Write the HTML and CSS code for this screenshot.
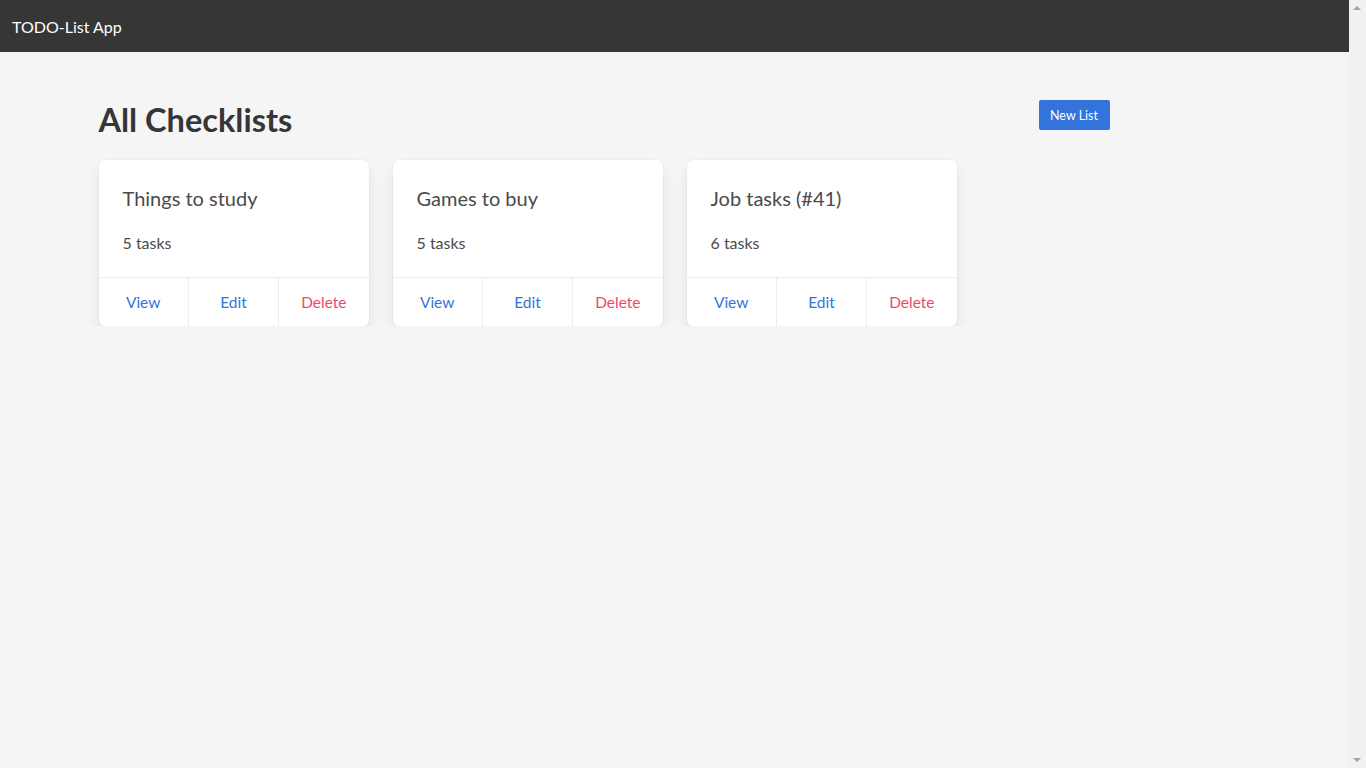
FILE: index.html
```html
<!DOCTYPE html>
<html lang="en">
<head>
<meta charset="utf-8">
<title>TODO-List App</title>
<link rel="stylesheet" href="styles.css">
</head>
<body>
<div class="page">
  <nav class="navbar">
    <span class="brand">TODO-List App</span>
  </nav>
  <main class="container">
    <header class="page-head">
      <h1 class="page-title">All Checklists</h1>
      <button class="btn-new">New List</button>
    </header>
    <section class="cards">
      <article class="card">
        <div class="card-content">
          <h2 class="card-title">Things to study</h2>
          <p class="card-count">5 tasks</p>
        </div>
        <footer class="card-footer">
          <a class="footer-item link">View</a>
          <a class="footer-item link">Edit</a>
          <a class="footer-item danger">Delete</a>
        </footer>
      </article>
      <article class="card">
        <div class="card-content">
          <h2 class="card-title">Games to buy</h2>
          <p class="card-count">5 tasks</p>
        </div>
        <footer class="card-footer">
          <a class="footer-item link">View</a>
          <a class="footer-item link">Edit</a>
          <a class="footer-item danger">Delete</a>
        </footer>
      </article>
      <article class="card">
        <div class="card-content">
          <h2 class="card-title">Job tasks (#41)</h2>
          <p class="card-count">6 tasks</p>
        </div>
        <footer class="card-footer">
          <a class="footer-item link">View</a>
          <a class="footer-item link">Edit</a>
          <a class="footer-item danger">Delete</a>
        </footer>
      </article>
    </section>
  </main>
</div>
<div class="scrollbar">
  <span class="arrow up"></span>
  <span class="arrow down"></span>
</div>
</body>
</html>
```

FILE: styles.css
```css
html {
  background: #f5f5f5;
}
body {
  margin: 0;
  font-family: "Lato", "Noto Sans", sans-serif;
  font-size: 16px;
  color: #4a4a4a;
  background: #f5f5f5;
}
.page {
  margin-right: 17px;
}
.navbar {
  height: 52px;
  background: #363636;
  display: flex;
  align-items: center;
  padding: 0 12px;
}
.brand {
  color: #fff;
  font-size: 16px;
}
.container {
  width: 1152px;
  margin: 0 auto;
  padding-top: 48px;
}
.page-head {
  display: flex;
  align-items: flex-start;
  width: 1011px;
  justify-content: space-between;
  margin-bottom: 21px;
}
.page-title {
  margin: 0;
  font-size: 32.5px;
  line-height: 39px;
  font-weight: 700;
  color: #363636;
}
.btn-new {
  height: 30px;
  width: 71px;
  padding: 0;
  border: none;
  border-radius: 2px;
  background: #3273dc;
  color: #fff;
  font-family: inherit;
  font-size: 12.5px;
}
.cards {
  display: flex;
  gap: 24px;
}
.card {
  width: 270px;
  background: #fff;
  border-radius: 6px;
  box-shadow: 0 8px 16px -2px rgba(10,10,10,0.1), 0 0 0 1px rgba(10,10,10,0.02);
  overflow: hidden;
}
.card-content {
  padding: 24px 24px 22px;
}
.card-title {
  margin: 0;
  font-size: 20px;
  line-height: 22px;
  font-weight: 400;
  color: #4a4a4a;
  padding-top: 3px;
  margin-bottom: 22px;
}
.card-count {
  margin: 0;
  font-size: 16px;
  line-height: 24px;
}
.card-footer {
  display: flex;
  border-top: 1px solid #ededed;
}
.footer-item {
  flex: 1;
  text-align: center;
  padding: 13px 0 12px;
  line-height: 23px;
  font-size: 15.5px;
  cursor: pointer;
}
.footer-item + .footer-item {
  border-left: 1px solid #ededed;
}
.link { color: #3273dc; }
.danger { color: #f14668; }
.scrollbar {
  position: fixed;
  top: 0;
  right: 0;
  bottom: 0;
  width: 17px;
  background: #f1f1f1;
}
.arrow {
  position: absolute;
  left: 4px;
  width: 0;
  height: 0;
  border-left: 4px solid transparent;
  border-right: 4px solid transparent;
}
.arrow.up {
  top: 6px;
  border-bottom: 4px solid #a3a3a3;
}
.arrow.down {
  bottom: 6px;
  border-top: 4px solid #a3a3a3;
}
```
